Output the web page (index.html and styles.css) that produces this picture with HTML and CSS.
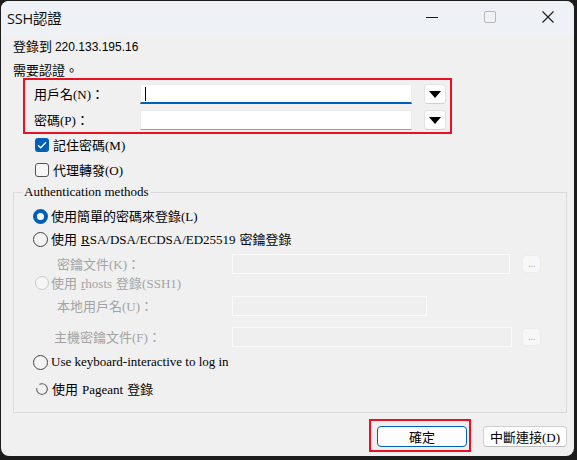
FILE: index.html
```html
<!DOCTYPE html>
<html lang="zh-Hant">
<head>
<meta charset="utf-8">
<title>SSH認證</title>
<link rel="stylesheet" href="styles.css">
</head>
<body>
<div class="window">
  <div class="titlebar">
    <div class="title">SSH認證</div>
    <div class="controls">
      <svg width="12" height="12" viewBox="0 0 12 12"><path d="M0 6.5h12" stroke="#1a1a1a" stroke-width="1"/></svg>
      <svg width="12" height="12" viewBox="0 0 12 12"><rect x="0.5" y="0.5" width="11" height="11" rx="1.5" fill="none" stroke="#b8b8b8"/></svg>
      <svg width="12" height="12" viewBox="0 0 12 12"><path d="M0.5 0.5L11.5 11.5M11.5 0.5L0.5 11.5" stroke="#1a1a1a" stroke-width="1.1"/></svg>
    </div>
  </div>
  <div class="content">
    <div class="info1">登錄到 <span class="ip">220.133.195.16</span></div>
    <div class="info2">需要認證。</div>
    <div class="redbox">
      <div class="frow">
        <label class="flabel">用戶名<span class="mn">(N)</span>：</label>
        <div class="input focus"><span class="caret"></span></div>
        <button class="drop"><svg width="12" height="7" viewBox="0 0 12 7"><path d="M0 0h12L6 7z" fill="#000"/></svg></button>
      </div>
      <div class="frow r2">
        <label class="flabel">密碼<span class="mn">(P)</span>：</label>
        <div class="input plain"></div>
        <button class="drop"><svg width="12" height="7" viewBox="0 0 12 7"><path d="M0 0h12L6 7z" fill="#000"/></svg></button>
      </div>
    </div>
    <div class="crow c1"><span class="cbox on"><svg width="10" height="8" viewBox="0 0 10 8"><path d="M1 4.2L3.7 6.8L9 1.2" fill="none" stroke="#fff" stroke-width="1.3"/></svg></span><span class="txt">記住密碼<span class="mn">(M)</span></span></div>
    <div class="crow c2"><span class="cbox"></span><span class="txt">代理轉發<span class="mn">(O)</span></span></div>
    <fieldset class="group">
      <legend class="serif">Authentication methods</legend>
      <div class="rrow ra"><span class="radio on"></span><span class="txt">使用簡單的密碼來登錄<span class="mn">(L)</span></span></div>
      <div class="rrow rb"><span class="radio"></span><span class="txt">使用<span class="serif lat"><u>R</u>SA/DSA/ECDSA/ED25519</span>密鑰登錄</span></div>
      <div class="srow rc"><span class="slabel">密鑰文件<span class="mn">(K)</span>：</span><div class="dinput w1"></div><span class="dots">...</span></div>
      <div class="rrow rd dis"><span class="radio dis"></span><span class="txt">使用<span class="serif lat"><u>r</u>hosts</span>登錄<span class="serif">(SSH1)</span></span></div>
      <div class="srow re"><span class="slabel">本地用戶名<span class="mn">(U)</span>：</span><div class="dinput w2"></div></div>
      <div class="srow rf"><span class="slabel l2">主機密鑰文件<span class="mn">(F)</span>：</span><div class="dinput w3"></div><span class="dots">...</span></div>
      <div class="rrow rg"><span class="radio"></span><span class="txt serif">Use keyboard-interactive to log in</span></div>
      <div class="rrow rh"><svg class="spin" width="12" height="12" viewBox="0 0 12 12"><circle cx="6" cy="6" r="5.3" fill="none" stroke="#555" stroke-width="1" stroke-dasharray="28 5.3" transform="rotate(-120 6 6)"/></svg><span class="txt">使用<span class="serif lat">Pageant</span>登錄</span></div>
    </fieldset>
    <div class="btnrow">
      <div class="okbox"><button class="btn ok">確定</button></div>
      <button class="btn cancel">中斷連接<span class="mn">(D)</span></button>
    </div>
  </div>
</div>
</body>
</html>
```
FILE: styles.css
```css
html, body {
  margin: 0;
  padding: 0;
}
body {
  width: 577px;
  height: 460px;
  background: #1c1c1c;
  overflow: hidden;
  font-family: "Noto Sans CJK TC", "Noto Sans", sans-serif;
  font-size: 13px;
  color: #000;
}
.window {
  margin: 1px 0 0 1px;
  width: 573px;
  height: 455px;
  background: #f0f0f0;
  border-radius: 8px;
  overflow: hidden;
}
.titlebar {
  height: 34px;
  background: #eef2f6;
  display: flex;
  align-items: center;
  justify-content: space-between;
}
.title {
  padding-left: 6px;
  font-family: "Open Sans", "Noto Sans CJK TC", sans-serif;
  font-size: 14.5px;
  letter-spacing: -0.2px;
  color: #111;
  margin-top: -1px;
}
.controls {
  display: flex;
  align-items: center;
  gap: 46px;
  padding-right: 20px;
  margin-top: -3px;
}
.content {
  padding: 0 7px 0 12px;
}
.info1 {
  margin-top: 1px;
  height: 20px;
  line-height: 20px;
}
.ip {
  font-family: "Liberation Sans", sans-serif;
  font-size: 12px;
}
.info2 {
  margin-top: 4px;
  height: 20px;
  line-height: 20px;
}
.txt {
  line-height: 18px;
  white-space: nowrap;
}
.mn {
  font-family: "Liberation Serif", serif;
  font-size: 13px;
}
.serif {
  font-family: "Liberation Serif", "Noto Sans CJK TC", serif;
}
.lat {
  margin: 0 4px;
}
.redbox {
  margin: -2px 0 0 10px;
  width: 425px;
  border: 2px solid #e81123;
  padding: 4px 0 0 0;
  height: 48px;
}
.frow {
  display: flex;
  align-items: center;
  height: 20px;
}
.frow.r2 { margin-top: 6px; }
.flabel {
  width: 115px;
  padding-left: 9px;
  box-sizing: border-box;
  line-height: 20px;
}
.input {
  width: 272px;
  height: 20px;
  background: #fff;
  box-sizing: border-box;
}
.input.focus {
  border: 1px solid #ececec;
  border-bottom: 2px solid #005fb8;
}
.input.plain {
  border: 1px solid #ececec;
  border-bottom: 1px solid #9a9a9a;
}
.caret {
  display: block;
  width: 1px;
  height: 14px;
  background: #000;
  margin: 2px 0 0 4px;
}
.drop {
  margin-left: 12px;
  width: 22px;
  height: 20px;
  border: 1px solid #e3e3e3;
  border-bottom-color: #cfcfcf;
  border-radius: 4px;
  background: #fdfdfd;
  padding: 0;
  display: flex;
  align-items: center;
  justify-content: center;
}
.crow {
  display: flex;
  align-items: center;
  height: 18px;
  padding-left: 22px;
}
.crow.c1 { margin-top: 2px; }
.crow.c2 { margin-top: 7px; }
.cbox {
  width: 14px;
  height: 14px;
  box-sizing: border-box;
  border: 1px solid #555;
  border-radius: 3px;
  background: #f6f6f6;
  margin-right: 4px;
  display: flex;
  align-items: center;
  justify-content: center;
}
.cbox.on {
  border: none;
  background: #005fb8;
}
.group {
  margin: 5px 0 0 0;
  padding: 0 0 14px 0;
  border: 1px solid #dadada;
  border-radius: 0;
  min-width: 0;
}
.group legend {
  margin-left: 8px;
  padding: 0 2px;
  font-size: 13px;
  line-height: 16px;
}
.rrow {
  display: flex;
  align-items: center;
  height: 18px;
  padding-left: 19px;
}
.radio {
  width: 15px;
  height: 15px;
  box-sizing: border-box;
  border-radius: 50%;
  border: 1px solid #444;
  background: #f4f4f4;
  margin-right: 3px;
}
.radio.on {
  border: 4.5px solid #005fb8;
  background: #fff;
}
.radio.dis {
  width: 14px;
  height: 14px;
  border-color: #cacaca;
  background: #f6f6f6;
  margin-left: 2px;
  margin-right: 2px;
}
.rrow.dis { color: #a3a3a3; }
.ra { margin-top: 7px; }
.rb { margin-top: 5px; }
.srow {
  display: flex;
  align-items: center;
  height: 20px;
}
.slabel {
  width: 218px;
  padding-left: 43px;
  box-sizing: border-box;
  color: #a3a3a3;
  line-height: 20px;
  white-space: nowrap;
}
.slabel.l2 { padding-left: 40px; }
.rc { margin-top: 6px; }
.rd { margin-top: 0; }
.re { margin-top: 4px; }
.rf { margin-top: 11px; }
.rg { margin-top: 6px; }
.rh { margin-top: 9px; padding-left: 22px; }
.spin { margin-right: 4px; }
.dinput {
  height: 20px;
  box-sizing: border-box;
  border: 1px solid #fafafa;
  background: #efefef;
}
.w1 { width: 278px; }
.w2 { width: 195px; }
.w3 { width: 280px; }
.dots {
  margin-left: 12px;
  width: 19px;
  height: 18px;
  box-sizing: border-box;
  border-radius: 4px;
  background: #f7f7f7;
  border: 1px solid #ececec;
  color: #b0b0b0;
  font-family: "Liberation Sans", sans-serif;
  font-size: 10px;
  line-height: 16px;
  text-align: center;
  letter-spacing: -0.5px;
}
.rf .dots { margin-left: 10px; }
.btnrow {
  display: flex;
  justify-content: flex-end;
  align-items: center;
  margin-top: 6px;
}
.okbox {
  border: 2px solid #e81123;
  padding: 5px 2px 3px 6px;
  margin-right: 12px;
}
.btn {
  height: 21px;
  border-radius: 4px;
  background: #fdfdfd;
  font-family: "Noto Sans CJK TC", sans-serif;
  font-size: 13px;
  padding: 0;
  color: #000;
  line-height: 19px;
}
.ok {
  width: 90px;
  border: 1px solid #005fb8;
  display: block;
}
.cancel {
  width: 84px;
  border: 1px solid #d0d0d0;
  border-bottom-color: #bdbdbd;
  margin-top: 2px;
}
```
